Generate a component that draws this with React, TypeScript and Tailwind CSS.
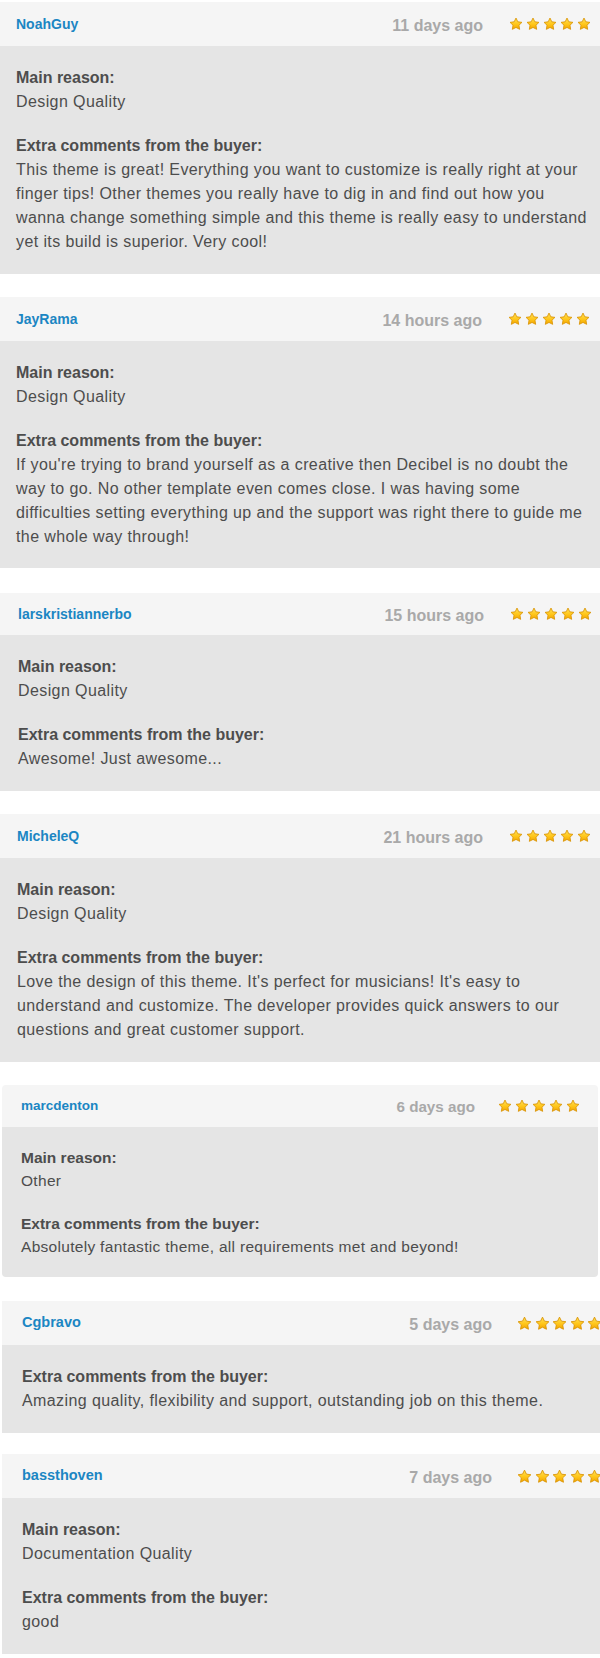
import React from "react";

type Review = {
  name: string;
  time: string;
  reason?: string;
  comment: string[];
  mt: string;
  wrap: string;
  header: string;
  body: string;
  nameCls: string;
  timeCls: string;
  starsCls: string;
  starSize: number;
  textCls: string;
  regCls: string;
  gapCls: string;
};

const Star = ({ size, id }: { size: number; id: string }) => (
  <svg width={size} height={size} viewBox="0 0 24 24" className="block shrink-0">
    <defs>
      <linearGradient id={id} x1="0" y1="0" x2="0" y2="1">
        <stop offset="0%" stopColor="#ffe25a" />
        <stop offset="55%" stopColor="#ffc61a" />
        <stop offset="100%" stopColor="#f2a400" />
      </linearGradient>
    </defs>
    <polygon
      points="12,1.8 15.1,8.2 22.2,9.2 17.1,14.1 18.3,21.2 12,17.9 5.7,21.2 6.9,14.1 1.8,9.2 8.9,8.2"
      fill={`url(#${id})`}
      stroke="#d99200"
      strokeWidth="1.4"
      strokeLinejoin="round"
    />
  </svg>
);

const reviews: Review[] = [
  {
    name: "NoahGuy",
    time: "11 days ago",
    reason: "Design Quality",
    comment: [
      "This theme is great! Everything you want to customize is really right at your",
      "finger tips! Other themes you really have to dig in and find out how you",
      "wanna change something simple and this theme is really easy to understand",
      "yet its build is superior. Very cool!",
    ],
    mt: "mt-[2px]",
    wrap: "w-[600px]",
    header: "h-[44px] pl-[16px] pr-[9px]",
    body: "px-[16px] pt-[20px] pb-[20px]",
    nameCls: "text-[14px]",
    timeCls: "text-[16px]",
    starsCls: "ml-[26px] gap-[3px]",
    starSize: 14,
    textCls: "text-[16px] leading-[24px]",
    regCls: "tracking-[0.4px]",
    gapCls: "mt-[20px]",
  },
  {
    name: "JayRama",
    time: "14 hours ago",
    reason: "Design Quality",
    comment: [
      "If you're trying to brand yourself as a creative then Decibel is no doubt the",
      "way to go. No other template even comes close. I was having some",
      "difficulties setting everything up and the support was right there to guide me",
      "the whole way through!",
    ],
    mt: "mt-[23px]",
    wrap: "w-[600px]",
    header: "h-[44px] pl-[16px] pr-[10px]",
    body: "px-[16px] pt-[20px] pb-[19px]",
    nameCls: "text-[14px]",
    timeCls: "text-[16px]",
    starsCls: "ml-[26px] gap-[3px]",
    starSize: 14,
    textCls: "text-[16px] leading-[24px]",
    regCls: "tracking-[0.4px]",
    gapCls: "mt-[20px]",
  },
  {
    name: "larskristiannerbo",
    time: "15 hours ago",
    reason: "Design Quality",
    comment: ["Awesome! Just awesome..."],
    mt: "mt-[25px]",
    wrap: "w-[600px]",
    header: "h-[42px] pl-[18px] pr-[8px]",
    body: "px-[18px] pt-[20px] pb-[20px]",
    nameCls: "text-[14px]",
    timeCls: "text-[16px]",
    starsCls: "ml-[26px] gap-[3px]",
    starSize: 14,
    textCls: "text-[16px] leading-[24px]",
    regCls: "tracking-[0.4px]",
    gapCls: "mt-[20px]",
  },
  {
    name: "MicheleQ",
    time: "21 hours ago",
    reason: "Design Quality",
    comment: [
      "Love the design of this theme. It's perfect for musicians! It's easy to",
      "understand and customize. The developer provides quick answers to our",
      "questions and great customer support.",
    ],
    mt: "mt-[23px]",
    wrap: "w-[600px]",
    header: "h-[44px] pl-[17px] pr-[9px]",
    body: "px-[17px] pt-[20px] pb-[20px]",
    nameCls: "text-[14px]",
    timeCls: "text-[16px]",
    starsCls: "ml-[26px] gap-[3px]",
    starSize: 14,
    textCls: "text-[16px] leading-[24px]",
    regCls: "tracking-[0.4px]",
    gapCls: "mt-[20px]",
  },
  {
    name: "marcdenton",
    time: "6 days ago",
    reason: "Other",
    comment: ["Absolutely fantastic theme, all requirements met and beyond!"],
    mt: "mt-[23px]",
    wrap: "ml-[2px] w-[596px] rounded-[4px] overflow-hidden",
    header: "h-[42px] pl-[19px] pr-[18px]",
    body: "px-[19px] pt-[19px] pb-[19px]",
    nameCls: "text-[13.5px]",
    timeCls: "text-[15.2px]",
    starsCls: "ml-[23px] gap-[3px]",
    starSize: 14,
    textCls: "text-[15.5px] leading-[23px]",
    regCls: "tracking-[0.3px]",
    gapCls: "mt-[20px]",
  },
  {
    name: "Cgbravo",
    time: "5 days ago",
    comment: ["Amazing quality, flexibility and support, outstanding job on this theme."],
    mt: "mt-[24px]",
    wrap: "ml-[2px] w-[598px] overflow-hidden",
    header: "h-[44px] pl-[20px] pr-0",
    body: "px-[20px] pt-[20px] pb-[20px]",
    nameCls: "text-[14.5px]",
    timeCls: "text-[16px]",
    starsCls: "ml-[25px] gap-[2.5px] -mr-[2px]",
    starSize: 15,
    textCls: "text-[16px] leading-[24px]",
    regCls: "tracking-[0.4px]",
    gapCls: "mt-[20px]",
  },
  {
    name: "bassthoven",
    time: "7 days ago",
    reason: "Documentation Quality",
    comment: ["good"],
    mt: "mt-[21px]",
    wrap: "ml-[2px] w-[598px] overflow-hidden",
    header: "h-[44px] pl-[20px] pr-0",
    body: "px-[20px] pt-[20px] pb-[20px]",
    nameCls: "text-[14.5px]",
    timeCls: "text-[16px]",
    starsCls: "ml-[25px] gap-[2.5px] -mr-[2px]",
    starSize: 15,
    textCls: "text-[16px] leading-[24px]",
    regCls: "tracking-[0.4px]",
    gapCls: "mt-[20px]",
  },
];

export default function App() {
  return (
    <div
      className="w-[600px] min-h-[1658px] bg-white text-[#4d4d4d] overflow-hidden"
      style={{ fontFamily: '"Liberation Sans", Arial, Helvetica, sans-serif' }}
    >
      {reviews.map((r, i) => (
        <div key={i} className={`${r.mt} ${r.wrap}`}>
          <div className={`flex items-center justify-between bg-[#f5f5f5] ${r.header}`}>
            <span className={`font-bold text-[#1b86c3] ${r.nameCls}`}>{r.name}</span>
            <div className="flex items-center">
              <span className={`font-bold text-[#a9a9a9] pt-[3px] ${r.timeCls}`}>{r.time}</span>
              <div className={`flex items-center ${r.starsCls}`}>
                {[0, 1, 2, 3, 4].map((s) => (
                  <Star key={s} size={r.starSize} id={`g${i}-${s}`} />
                ))}
              </div>
            </div>
          </div>
          <div className={`bg-[#e5e5e5] ${r.body} ${r.textCls}`}>
            {r.reason && (
              <>
                <div className="font-bold">Main reason:</div>
                <div className={r.regCls}>{r.reason}</div>
              </>
            )}
            <div className={r.reason ? r.gapCls : ""}>
              <div className="font-bold">Extra comments from the buyer:</div>
              {r.comment.map((line, j) => (
                <div key={j} className={`whitespace-nowrap ${r.regCls}`}>
                  {line}
                </div>
              ))}
            </div>
          </div>
        </div>
      ))}
    </div>
  );
}
